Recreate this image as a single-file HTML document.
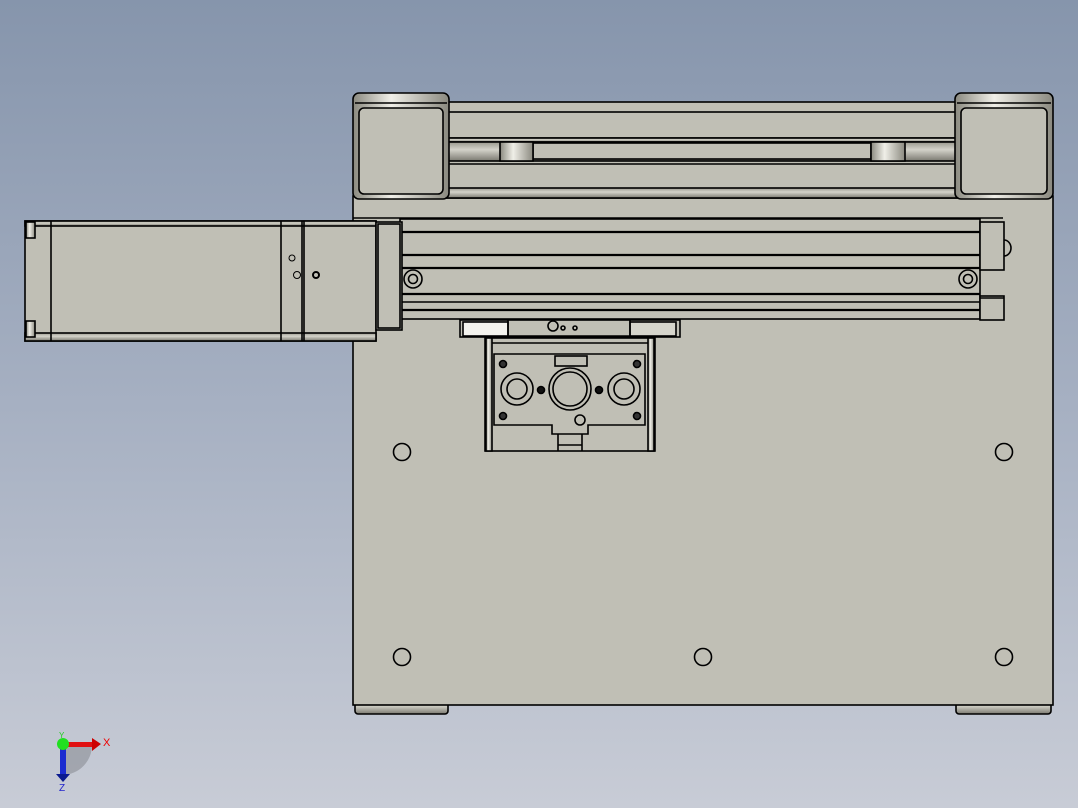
<!DOCTYPE html>
<html><head><meta charset="utf-8"><style>
html,body{margin:0;padding:0;width:1078px;height:808px;overflow:hidden}
svg{display:block}
</style></head><body>
<svg width="1078" height="808" viewBox="0 0 1078 808" xmlns="http://www.w3.org/2000/svg">
<defs>
<linearGradient id="bg" x1="0" y1="0" x2="0" y2="1">
<stop offset="0" stop-color="#8695ac"/><stop offset="0.5" stop-color="#a6b0c2"/><stop offset="1" stop-color="#c8ccd6"/>
</linearGradient>
<linearGradient id="cyl" x1="0" y1="0" x2="0" y2="1">
<stop offset="0" stop-color="#9a998f"/><stop offset="0.4" stop-color="#d4d3ca"/><stop offset="1" stop-color="#7a7970"/>
</linearGradient>
<linearGradient id="cylv" x1="0" y1="0" x2="1" y2="0">
<stop offset="0" stop-color="#8a897f"/><stop offset="0.4" stop-color="#f0efe8"/><stop offset="1" stop-color="#8a897f"/>
</linearGradient>
</defs>
<rect width="1078" height="808" fill="url(#bg)"/>
<g stroke="#000" stroke-width="1.6" fill="#c0bfb5">
<rect x="355" y="700" width="93" height="14" rx="3" fill="url(#cyl)"/>
<rect x="956" y="700" width="95" height="14" rx="3" fill="url(#cyl)"/>
<rect x="353" y="196" width="700" height="509"/>
<rect x="447" y="102" width="510" height="96"/>
<rect x="447" y="112" width="510" height="26" fill="#c0bfb5"/>
<rect x="447" y="138" width="510" height="4" fill="url(#cyl)"/>
<rect x="447" y="142" width="510" height="19" fill="url(#cyl)"/>
<rect x="533" y="143" width="338" height="16" fill="#c0bfb5"/>
<rect x="500" y="142" width="33" height="19" fill="url(#cylv)"/>
<rect x="871" y="142" width="34" height="19" fill="url(#cylv)"/>
<line x1="447" y1="164" x2="957" y2="164"/>
<rect x="447" y="188" width="510" height="10" fill="url(#cyl)"/>
<rect x="353" y="93" width="96" height="106" rx="6" fill="url(#cylv)"/>
<rect x="359" y="108" width="84" height="86" rx="5"/>
<line x1="355" y1="103" x2="447" y2="103"/>
<rect x="955" y="93" width="98" height="106" rx="6" fill="url(#cylv)"/>
<rect x="961" y="108" width="86" height="86" rx="5"/>
<line x1="957" y1="103" x2="1051" y2="103"/>
<line x1="353" y1="218" x2="1003" y2="218"/>
<rect x="400" y="219" width="580" height="100"/>
<line x1="400" y1="232" x2="980" y2="232" stroke-width="2.2"/>
<line x1="400" y1="255" x2="980" y2="255" stroke-width="2.2"/>
<line x1="400" y1="268" x2="980" y2="268" stroke-width="2.2"/>
<line x1="400" y1="294" x2="980" y2="294" stroke-width="2.2"/>
<line x1="400" y1="302" x2="980" y2="302"/>
<line x1="400" y1="310" x2="980" y2="310" stroke-width="2.2"/>
<circle cx="413" cy="279" r="9" fill="none"/><circle cx="413" cy="279" r="4.5" fill="none"/>
<circle cx="968" cy="279" r="9" fill="none"/><circle cx="968" cy="279" r="4.5" fill="none"/>
<rect x="980" y="222" width="24" height="48"/>
<rect x="980" y="296" width="24" height="24"/>
<line x1="980" y1="298" x2="1004" y2="298"/>
<path d="M1004,240 A7,8 0 0 1 1004,256" fill="none"/>
<rect x="25" y="221" width="351" height="120" fill="#c0bfb5"/>
<rect x="25" y="221" width="351" height="5" fill="url(#cyl)"/>
<rect x="25" y="333" width="351" height="8" fill="url(#cyl)"/>
<line x1="51" y1="221" x2="51" y2="341"/>
<line x1="281" y1="221" x2="281" y2="341"/>
<line x1="302" y1="221" x2="302" y2="341"/>
<line x1="304" y1="221" x2="304" y2="341"/>
<rect x="26" y="222" width="9" height="16" fill="url(#cylv)"/>
<rect x="26" y="321" width="9" height="16" fill="url(#cylv)"/>
<circle cx="292" cy="258" r="3" fill="none" stroke-width="1"/>
<circle cx="297" cy="275" r="3.5" fill="none" stroke-width="1"/>
<circle cx="316" cy="275" r="3" fill="none" stroke-width="2"/>
<rect x="376" y="222" width="26" height="108"/>
<rect x="378" y="224" width="22" height="104" fill="none"/>
<rect x="460" y="320" width="220" height="17"/>
<rect x="463" y="322" width="45" height="14" fill="#f4f3ee"/>
<rect x="630" y="322" width="46" height="14" fill="#d6d5cc"/>
<path d="M508,320 L508,336 L630,336 L630,320" fill="none"/>
<circle cx="553" cy="326" r="5" fill="none"/><circle cx="563" cy="328" r="2" fill="none"/><circle cx="575" cy="328" r="2" fill="none"/>
<rect x="485" y="338" width="170" height="113"/>
<rect x="486" y="338" width="6" height="113" fill="url(#cylv)"/>
<rect x="648" y="338" width="6" height="113" fill="url(#cylv)"/>
<line x1="492" y1="343" x2="648" y2="343"/>
<path d="M494,354 L645,354 L645,425 L588,425 L588,434 L552,434 L552,425 L494,425 Z" fill="#c0bfb5"/>
<line x1="558" y1="434" x2="558" y2="451"/><line x1="582" y1="434" x2="582" y2="451"/>
<line x1="558" y1="445" x2="582" y2="445"/>
<circle cx="517" cy="389" r="16" fill="none"/><circle cx="517" cy="389" r="10" fill="none"/>
<circle cx="624" cy="389" r="16" fill="none"/><circle cx="624" cy="389" r="10" fill="none"/>
<circle cx="570" cy="389" r="21" fill="none"/><circle cx="570" cy="389" r="17" fill="none"/>
<circle cx="541" cy="390" r="3.5" fill="#111"/><circle cx="599" cy="390" r="3.5" fill="#111"/>
<circle cx="503" cy="364" r="3.5" fill="#333"/><circle cx="637" cy="364" r="3.5" fill="#333"/>
<circle cx="503" cy="416" r="3.5" fill="#333"/><circle cx="637" cy="416" r="3.5" fill="#333"/>
<circle cx="580" cy="420" r="5" fill="none"/>
<rect x="555" y="356" width="32" height="10" fill="none"/>
<circle cx="402" cy="452" r="8.5" fill="none"/>
<circle cx="1004" cy="452" r="8.5" fill="none"/>
<circle cx="402" cy="657" r="8.5" fill="none"/>
<circle cx="703" cy="657" r="8.5" fill="none"/>
<circle cx="1004" cy="657" r="8.5" fill="none"/>
</g>
<path d="M63,745 L92,745 A30,30 0 0 1 63,775 Z" fill="#8a8d95" opacity="0.6"/>
<rect x="60" y="745" width="6" height="30" fill="#1a2bd0"/>
<polygon points="56,774 70,774 63,782" fill="#0a1a90"/>
<rect x="63" y="742" width="30" height="5" fill="#e01010"/>
<polygon points="92,738 92,751 101,744" fill="#c00"/>
<circle cx="63" cy="744" r="6" fill="#20e020"/>
<text x="103" y="746" fill="#e00" font-family="Liberation Sans, sans-serif" font-size="11">X</text>
<text x="59" y="791" fill="#22c" font-family="Liberation Sans, sans-serif" font-size="10">Z</text>
<text x="59" y="738" fill="#2c2" font-family="Liberation Sans, sans-serif" font-size="8">Y</text>
</svg>
</body></html>
